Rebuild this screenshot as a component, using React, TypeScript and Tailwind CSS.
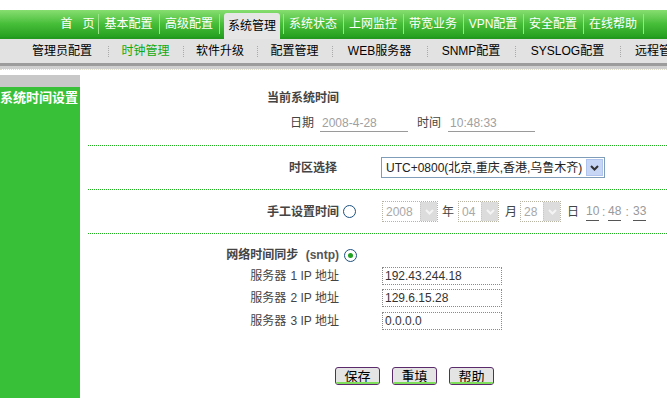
import React from "react";

const F = "font-['Liberation_Sans','Noto_Sans_CJK_SC',sans-serif]";

const topItems: { t: React.ReactNode; w: number; active?: boolean }[] = [
  { t: <span className="flex gap-[10px]"><span>首</span><span>页</span></span>, w: 41 },
  { t: "基本配置", w: 61 },
  { t: "高级配置", w: 60 },
  { t: "系统管理", w: 64, active: true },
  { t: "系统状态", w: 60 },
  { t: "上网监控", w: 60 },
  { t: "带宽业务", w: 60 },
  { t: "VPN配置", w: 60 },
  { t: "安全配置", w: 60 },
  { t: "在线帮助", w: 60 },
];

const subItems: { t: string; w: number; active?: boolean }[] = [
  { t: "管理员配置", w: 92 },
  { t: "时钟管理", w: 75, active: true },
  { t: "软件升级", w: 74 },
  { t: "配置管理", w: 75 },
  { t: "WEB服务器", w: 95 },
  { t: "SNMP配置", w: 88 },
  { t: "SYSLOG配置", w: 105 },
];

function Radio({ checked }: { checked?: boolean }) {
  return (
    <span className="w-[13px] h-[13px] rounded-full border border-[#1c5180] bg-white flex items-center justify-center shrink-0">
      {checked && <span className="w-[5px] h-[5px] rounded-full bg-[#21a121]" />}
    </span>
  );
}

function DisSelect({ v, w }: { v: string; w: number }) {
  return (
    <div
      className="h-[21px] border border-dotted border-[#b8b4a4] flex items-stretch bg-white shrink-0"
      style={{ width: w }}
    >
      <div className="flex-1 flex items-center pl-[3px] text-[12px] text-[#a8a8a8]">{v}</div>
      <div className="w-[17px] bg-[#dcdcdc] border-l border-dotted border-[#c8c8c8] flex items-center justify-center">
        <svg width="9" height="6" viewBox="0 0 9 6">
          <path d="M1 1 L4.5 4.5 L8 1" stroke="#f4f4f4" strokeWidth="2" fill="none" />
        </svg>
      </div>
    </div>
  );
}

function Btn({ t }: { t: string }) {
  return (
    <div className="w-[45px] h-[18px] rounded-[3px] border border-[#5a2a6a] bg-[#e4e4e4] relative flex items-center justify-center text-[13px] text-black overflow-hidden">
      <span className="leading-none">{t}</span>
      <span className="absolute left-0 right-0 bottom-0 h-[2px] bg-[#7ee05a]" />
    </div>
  );
}

export default function App() {
  return (
    <div className={`w-[667px] h-[398px] overflow-hidden bg-white ${F} text-[12px] text-[#444]`}>
      <div className="h-[10px] bg-white" />
      {/* top nav */}
      <div className="h-[27px] bg-linear-to-b from-[#86de70] via-[#48bf3a] to-[#25a020] flex items-stretch">
        <div className="w-[57px] shrink-0" />
        {topItems.map((it, i) => (
          <div
            key={i}
            className="relative flex items-stretch shrink-0"
            style={{ width: it.w }}
          >
            {i > 0 && <span className="absolute left-0 top-[4px] bottom-[3px] w-px bg-[#9ae48a]" />}
            {it.active ? (
              <div className="flex-1 ml-[5px] mr-[3px] mt-[3px] rounded-t-[3px] bg-[#e6e6e6] flex items-center justify-center text-black text-[12px] pt-[1px]">
                {it.t}
              </div>
            ) : (
              <div className="flex-1 flex items-center justify-center text-white text-[12px] pt-[1px]">{it.t}</div>
            )}
          </div>
        ))}
        <div className="relative flex-1">
          <span className="absolute left-0 top-[4px] bottom-[3px] w-px bg-[#9ae48a]" />
        </div>
      </div>
      {/* subnav */}
      <div className="h-[2px] flex">
        <div className="w-[224px] bg-[#23991f]" />
        <div className="w-[56px] bg-[#e6e6e6]" />
        <div className="flex-1 bg-[#23991f]" />
      </div>
      <div className="h-[24px] bg-[#e2e2e2] flex items-stretch overflow-hidden">
        <div className="w-[16px] shrink-0" />
        {subItems.map((it, i) => (
          <div key={i} className="relative shrink-0 flex items-center justify-center" style={{ width: it.w }}>
            {i > 0 && <span className="absolute left-0 top-[7px] bottom-[6px] border-l border-dotted border-[#aaaaaa]" />}
            <span className={`text-[12px] whitespace-nowrap ${it.active ? "text-[#11aa11]" : "text-black"}`}>{it.t}</span>
          </div>
        ))}
        <div className="relative shrink-0 flex items-center pl-[15px] w-[80px]">
          <span className="absolute left-0 top-[7px] bottom-[6px] border-l border-dotted border-[#aaaaaa]" />
          <span className="text-[12px] whitespace-nowrap text-black">远程管理</span>
        </div>
      </div>
      <div className="h-[3px] bg-[#9c9c9c]" />
      <div className="h-[3px] bg-[#cfcfcf]" />
      {/* body */}
      <div className="flex h-[329px]">
        {/* sidebar */}
        <div className="w-[80px] shrink-0 flex flex-col">
          <div className="h-[6px] border-t border-dotted border-[#e0dccc]" />
          <div className="h-[12px] bg-[#c8c8c8]" />
          <div className="flex-1 bg-[#38c038] pt-[3px]">
            <div className="text-white font-bold text-[13px] leading-[15px] whitespace-nowrap">系统时间设置</div>
          </div>
        </div>
        {/* main */}
        <div className="flex-1 pl-[8px] border-t border-dotted border-[#e0dccc]">
          {/* section 1 */}
          <div className="h-[76px] border-b border-dotted border-[#22b022] pt-[21px]">
            <div className="w-[251px] text-right font-bold leading-[14px] h-[14px] text-[#444]">当前系统时间</div>
            <div className="mt-[8px] h-[20px] flex items-center pl-[202px]">
              <span>日期</span>
              <div className="ml-[6px] w-[88px] h-[18px] border-b border-[#9a9a9a] flex items-center pl-[2px] text-[#a0a0a0]">2008-4-28</div>
              <span className="ml-[9px]">时间</span>
              <div className="ml-[7px] w-[87px] h-[18px] border-b border-[#9a9a9a] flex items-center pl-[2px] text-[#a0a0a0]">10:48:33</div>
            </div>
          </div>
          {/* section 2 */}
          <div className="h-[44px] border-b border-dotted border-[#22b022] flex items-center">
            <div className="w-[251px] text-right font-bold pr-[2px]">时区选择</div>
            <div className="ml-[42px] w-[224px] h-[21px] border border-[#7f9db9] bg-white flex items-stretch">
              <div className="flex-1 flex items-center pl-[4px] text-[#222] whitespace-nowrap overflow-hidden">UTC+0800(北京,重庆,香港,乌鲁木齐)</div>
              <div className="w-[17px] m-[1px] bg-[#c8d6f6] border border-[#b0c4ee] flex items-center justify-center">
                <svg width="9" height="6" viewBox="0 0 9 6">
                  <path d="M1 1 L4.5 4.5 L8 1" stroke="#333" strokeWidth="2" fill="none" />
                </svg>
              </div>
            </div>
          </div>
          {/* section 3 */}
          <div className="h-[44px] border-b border-dotted border-[#22b022] flex items-center">
            <div className="w-[251px] text-right font-bold">手工设置时间</div>
            <span className="ml-[4px]"><Radio /></span>
            <span className="ml-[26px]"><DisSelect v="2008" w={56} /></span>
            <span className="ml-[4px]">年</span>
            <span className="ml-[4px]"><DisSelect v="04" w={41} /></span>
            <span className="ml-[6px]">月</span>
            <span className="ml-[3px]"><DisSelect v="28" w={41} /></span>
            <span className="ml-[6px]">日</span>
            <span className="ml-[7px] w-[13px] border-b border-[#555] text-[#999] text-center leading-[18px]">10</span>
            <span className="w-[9px] text-center text-[#999]">:</span>
            <span className="w-[13px] border-b border-[#555] text-[#999] text-center leading-[18px]">48</span>
            <span className="w-[12px] text-center text-[#999]">:</span>
            <span className="w-[13px] border-b border-[#555] text-[#999] text-center leading-[18px]">33</span>
          </div>
          {/* section 4 */}
          <div className="pt-[11px]">
            <div className="h-[20px] flex items-center">
              <div className="w-[251px] text-right font-bold">
                网络时间同步 <span className="ml-[4px] font-bold text-[#555]">(sntp)</span>
              </div>
              <span className="ml-[5px]"><Radio checked /></span>
            </div>
            {[
              ["1", "192.43.244.18", 22],
              ["2", "129.6.15.28", 22],
              ["3", "0.0.0.0", 23],
            ].map(([n, ip, h]) => (
              <div key={n as string} className="flex items-center" style={{ height: h as number }}>
                <div className="w-[251px] text-right whitespace-nowrap">
                  服务器 <span className="ml-[1px]">{n} IP</span> <span>地址</span>
                </div>
                <div className="ml-[43px] w-[120px] h-[18px] border border-dotted border-[#8a8a8a] flex items-center pl-[2px] text-[#333]">
                  {ip}
                </div>
              </div>
            ))}
            <div className="mt-[35px] pl-[247px] flex gap-[12px]">
              <Btn t="保存" />
              <Btn t="重填" />
              <Btn t="帮助" />
            </div>
          </div>
        </div>
      </div>
    </div>
  );
}
